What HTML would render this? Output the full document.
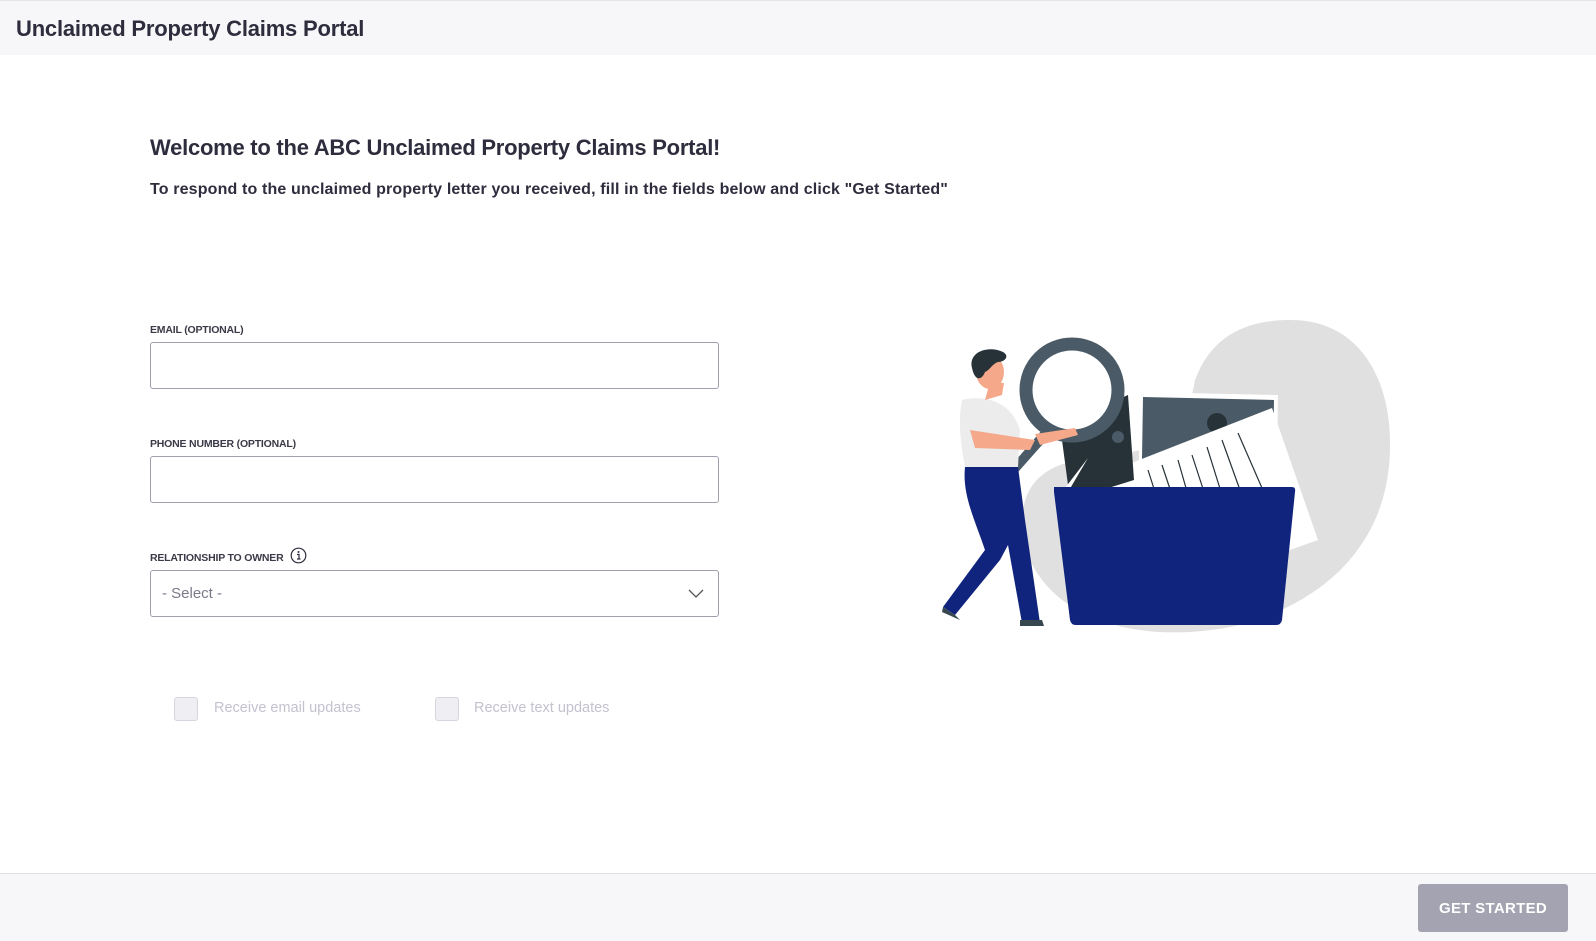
<!DOCTYPE html>
<html><head><meta charset="utf-8"><style>
*{box-sizing:border-box;margin:0;padding:0}
body{width:1596px;height:941px;overflow:hidden;background:#fff;font-family:"Liberation Sans",sans-serif;color:#2e2d3d;position:relative}
.hdr{position:absolute;left:0;top:0;width:1596px;height:55px;background:#f7f7f9;border-top:1px solid #e4e4e8}
.hdr h1{position:absolute;left:16px;top:15px;font-size:22px;font-weight:bold;letter-spacing:-0.2px;color:#2e2d3d}
.wel{position:absolute;left:150px;top:135px;font-size:22px;font-weight:bold;letter-spacing:-0.25px}
.sub{position:absolute;left:150px;top:181px;font-size:16px;font-weight:bold;letter-spacing:0.15px}
.lbl{position:absolute;left:150px;font-size:10.5px;font-weight:bold;color:#3b3a48;letter-spacing:-0.2px}
.inp{position:absolute;left:150px;width:569px;height:47px;border:1px solid #a09fae;border-radius:3px;background:#fff}
.sel{font-size:15px;color:#7a798a;padding:14px 11px}
.cb{position:absolute;top:697px;width:24px;height:24px;border:1px solid #d6d6de;border-radius:3px;background:#efeff3}
.cbt{position:absolute;top:700px;font-size:14.5px;color:#c3c2cf;letter-spacing:0px}
.ftr{position:absolute;left:0;top:873px;width:1596px;height:68px;background:#f7f7f9;border-top:1px solid #e0e0e6}
.btn{position:absolute;left:1418px;top:884px;width:150px;height:48px;background:#a3a3b1;border-radius:3px;color:#fff;font-weight:bold;font-size:15px;text-align:center;line-height:49px;letter-spacing:0.3px}
</style></head><body>
<div class="hdr"><h1>Unclaimed Property Claims Portal</h1></div>
<div class="wel">Welcome to the ABC Unclaimed Property Claims Portal!</div>
<div class="sub">To respond to the unclaimed property letter you received, fill in the fields below and click "Get Started"</div>
<div class="lbl" style="top:324px">EMAIL (OPTIONAL)</div>
<div class="inp" style="top:342px"></div>
<div class="lbl" style="top:438px">PHONE NUMBER (OPTIONAL)</div>
<div class="inp" style="top:456px"></div>
<div class="lbl" style="top:552px">RELATIONSHIP TO OWNER</div>
<svg style="position:absolute;left:290px;top:547px" width="17" height="17" viewBox="0 0 17 17"><circle cx="8.5" cy="8.5" r="7.3" fill="none" stroke="#2e2d3d" stroke-width="1.2"/><circle cx="8.5" cy="5" r="1" fill="#2e2d3d"/><path d="M7 7.5h2v4.5M7 12h3.5" stroke="#2e2d3d" stroke-width="1.2" fill="none"/></svg>
<div class="inp sel" style="top:570px">- Select -<svg style="position:absolute;right:14px;top:18px" width="16" height="10" viewBox="0 0 16 10"><path d="M1 1l7 7 7-7" fill="none" stroke="#555" stroke-width="1.3"/></svg></div>
<div class="cb" style="left:174px"></div><div class="cbt" style="left:214px">Receive email updates</div>
<div class="cb" style="left:435px"></div><div class="cbt" style="left:474px">Receive text updates</div>
<svg style="position:absolute;left:0;top:0" width="1596" height="941">
<path d="M1287 320 C1360 318 1392 380 1390 450 C1388 540 1330 600 1240 625 C1150 645 1060 625 1030 560 C1015 520 1020 480 1060 465 C1120 445 1180 470 1195 380 C1210 340 1240 321 1287 320Z" fill="#e0e0e0"/>
<path d="M1140 392 L1278 395 L1276 540 L1138 540Z" fill="#fff"/>
<path d="M1143 397 L1274 400 L1272 520 L1141 520Z" fill="#4a5a66"/>
<circle cx="1217" cy="423" r="10" fill="#263238"/>
<path d="M1088 480 L1272 408 L1318 540 L1150 600Z" fill="#fff"/>
<g stroke="#263238" stroke-width="1.2"><path d="M1238 433 L1262 488"/><path d="M1222 440 L1240 490"/><path d="M1207 447 L1222 495"/><path d="M1192 455 L1205 495"/><path d="M1178 460 L1188 495"/><path d="M1162 465 L1172 495"/><path d="M1148 470 L1156 495"/></g>
<path d="M1060 425 L1128 395 L1134 480 L1070 500Z" fill="#263238"/>
<circle cx="1118" cy="437" r="6" fill="#4a5a66"/>
<path d="M1062 492 L1088 458 L1068 492 L1090 500Z" fill="#fff"/>
<path d="M1054 487 L1292 487 Q1296 487 1295 492 L1282 620 Q1281 625 1276 625 L1076 625 Q1071 625 1070 620 L1054 492Z" fill="#10247e"/>
<circle cx="1072" cy="390" r="46" fill="#fff" stroke="#4a5a66" stroke-width="13"/>
<path d="M1042 430 L997 482 L1004 488 L1050 436Z" fill="#4a5a66"/>
<path d="M1035 434 L1075 428 L1078 435 L1040 445Z" fill="#f5a98a"/>
<path d="M962 400 C980 395 1010 398 1020 430 L1018 467 L965 467 C960 440 958 420 962 400Z" fill="#ececec"/>
<path d="M985 400 L1002 395 L1004 383 L990 382Z" fill="#f5a98a"/>
<ellipse cx="990" cy="372" rx="14" ry="17" fill="#f5a98a"/>
<path d="M972 368 C968 352 988 345 1003 352 C1010 356 1005 362 998 362 C992 364 990 370 985 372 C982 380 975 382 972 368Z" fill="#263238"/>
<path d="M970 430 L1035 440 L1030 450 L975 448Z" fill="#f5a98a"/>
<path d="M965 467 L1018 467 L1025 520 L1040 623 L1022 623 L1008 545 L1000 560 L955 615 L943 607 L985 550 C975 520 962 495 965 467Z" fill="#10247e"/>
<path d="M943 607 L955 615 L960 620 L942 612Z" fill="#37474f"/>
<path d="M1020 620 L1042 620 L1044 626 L1020 626Z" fill="#37474f"/>
</svg>
<div class="ftr"></div>
<div class="btn">GET STARTED</div>
</body></html>
